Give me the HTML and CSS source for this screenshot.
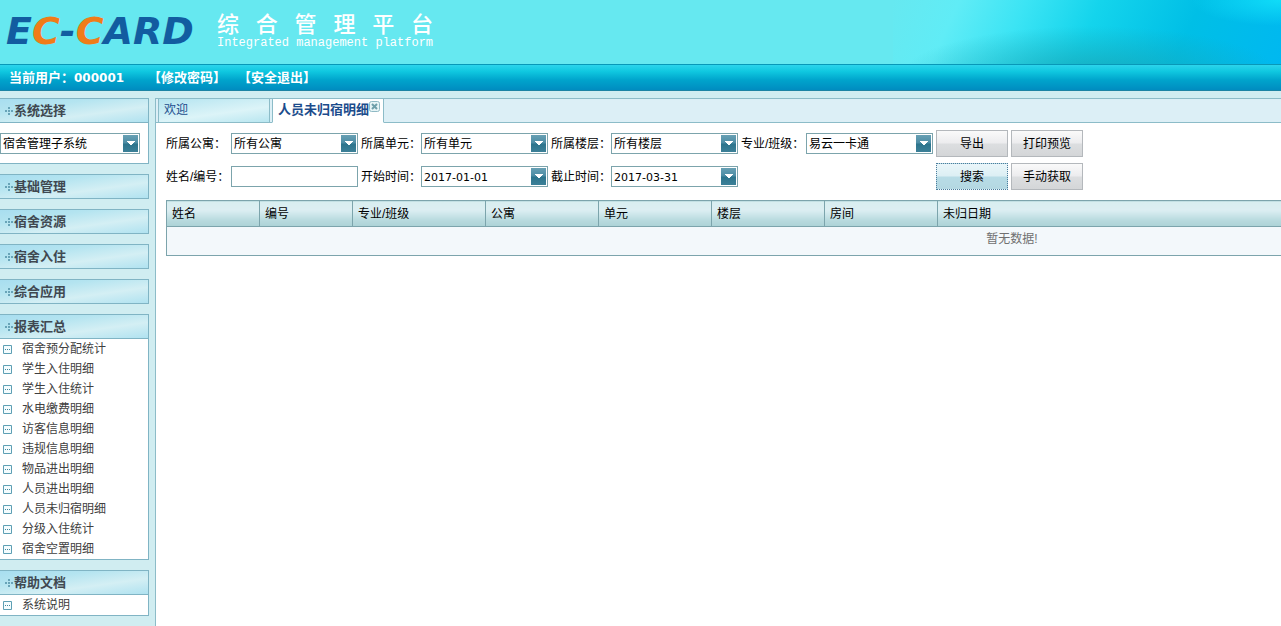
FILE: index.html
```html
<!DOCTYPE html>
<html lang="zh-CN">
<head>
<meta charset="utf-8">
<title>综合管理平台</title>
<link rel="stylesheet" href="styles.css">
</head>
<body>
<svg class="defs" aria-hidden="true">
  <symbol id="cross" viewBox="0 0 8 8"><path d="M3 0h2v2H3zM3 3h2v2H3zM3 6h2v2H3zM0 3h2v2H0zM6 3h2v2H6z" fill="#68a4b8"/></symbol>
  <symbol id="leaf" viewBox="0 0 9 9"><path d="M.5.500h8v8h-8z" fill="#f4fcfe" stroke="#5d9fb4"/><path d="M2 4h1v1H2zM4 4h1v1H4zM6 4h1v1H6z" fill="#41859c"/></symbol>
  <symbol id="down" viewBox="0 0 15 17"><path d="M4 6h8v1h-1v1h-1v1H9v1H7V9H6V8H5V7H4z" fill="#fff"/></symbol>
  <symbol id="close" viewBox="0 0 11 11"><rect x=".5" y=".5" width="10" height="10" rx="2" fill="#e6f4f6" stroke="#8fb9c4"/><path d="M3 3l5 5M8 3l-5 5" stroke="#6f9faa" stroke-width="2"/></symbol>
</svg>
<header class="banner">
  <div class="logo">E<span class="logo-c">C</span>-<span class="logo-c">C</span>ARD</div>
  <div class="titles">
    <h1 class="title">综合管理平台</h1>
    <p class="subtitle">Integrated management platform</p>
  </div>
</header>
<nav class="userbar">
  <span class="user">当前用户：<span class="user-id">000001</span></span>
  <a href="#password">【修改密码】</a>
  <a href="#logout">【安全退出】</a>
</nav>
<div class="layout">
  <aside class="sidebar">
    <section class="panel">
      <h2 class="panel-head"><svg class="cross"><use href="#cross"/></svg>系统选择</h2>
      <div class="panel-body">
        <div class="combo system">
          <select class="combo-field" aria-label="系统选择"><option>宿舍管理子系统</option></select>
          <svg class="combo-arrow"><use href="#down"/></svg>
        </div>
      </div>
    </section>
    <section class="panel"><h2 class="panel-head"><svg class="cross"><use href="#cross"/></svg>基础管理</h2></section>
    <section class="panel"><h2 class="panel-head"><svg class="cross"><use href="#cross"/></svg>宿舍资源</h2></section>
    <section class="panel"><h2 class="panel-head"><svg class="cross"><use href="#cross"/></svg>宿舍入住</h2></section>
    <section class="panel"><h2 class="panel-head"><svg class="cross"><use href="#cross"/></svg>综合应用</h2></section>
    <section class="panel">
      <h2 class="panel-head"><svg class="cross"><use href="#cross"/></svg>报表汇总</h2>
      <ul class="menu">
        <li><a href="#r1"><svg class="leaf"><use href="#leaf"/></svg>宿舍预分配统计</a></li>
        <li><a href="#r2"><svg class="leaf"><use href="#leaf"/></svg>学生入住明细</a></li>
        <li><a href="#r3"><svg class="leaf"><use href="#leaf"/></svg>学生入住统计</a></li>
        <li><a href="#r4"><svg class="leaf"><use href="#leaf"/></svg>水电缴费明细</a></li>
        <li><a href="#r5"><svg class="leaf"><use href="#leaf"/></svg>访客信息明细</a></li>
        <li><a href="#r6"><svg class="leaf"><use href="#leaf"/></svg>违规信息明细</a></li>
        <li><a href="#r7"><svg class="leaf"><use href="#leaf"/></svg>物品进出明细</a></li>
        <li><a href="#r8"><svg class="leaf"><use href="#leaf"/></svg>人员进出明细</a></li>
        <li><a href="#r9"><svg class="leaf"><use href="#leaf"/></svg>人员未归宿明细</a></li>
        <li><a href="#r10"><svg class="leaf"><use href="#leaf"/></svg>分级入住统计</a></li>
        <li><a href="#r11"><svg class="leaf"><use href="#leaf"/></svg>宿舍空置明细</a></li>
      </ul>
    </section>
    <section class="panel">
      <h2 class="panel-head"><svg class="cross"><use href="#cross"/></svg>帮助文档</h2>
      <ul class="menu">
        <li><a href="#help"><svg class="leaf"><use href="#leaf"/></svg>系统说明</a></li>
      </ul>
    </section>
  </aside>
  <main class="content">
    <div class="tabs">
      <a class="tab" href="#welcome">欢迎</a>
      <div class="tab tab-active"><a href="#absent">人员未归宿明细</a><button class="tab-close" type="button" aria-label="关闭"><svg class="close"><use href="#close"/></svg></button></div>
    </div>
    <form class="filters">
      <label for="building">所属公寓：</label>
      <div class="combo"><select class="combo-field" id="building"><option>所有公寓</option></select><svg class="combo-arrow"><use href="#down"/></svg></div>
      <label for="unit">所属单元：</label>
      <div class="combo"><select class="combo-field" id="unit"><option>所有单元</option></select><svg class="combo-arrow"><use href="#down"/></svg></div>
      <label for="floor">所属楼层：</label>
      <div class="combo"><select class="combo-field" id="floor"><option>所有楼层</option></select><svg class="combo-arrow"><use href="#down"/></svg></div>
      <label for="class">专业/班级：</label>
      <div class="combo"><select class="combo-field" id="class"><option>易云一卡通</option></select><svg class="combo-arrow"><use href="#down"/></svg></div>
      <button class="btn" type="button">导出</button>
      <button class="btn" type="button">打印预览</button>

      <label for="name">姓名/编号：</label>
      <input class="text" id="name" type="text">
      <label for="start">开始时间：</label>
      <div class="combo"><input class="combo-field date" id="start" type="text" value="2017-01-01"><button class="combo-button" type="button" aria-label="选择开始时间"><svg class="combo-arrow"><use href="#down"/></svg></button></div>
      <label for="end">截止时间：</label>
      <div class="combo"><input class="combo-field date" id="end" type="text" value="2017-03-31"><button class="combo-button" type="button" aria-label="选择截止时间"><svg class="combo-arrow"><use href="#down"/></svg></button></div>
      <button class="btn btn-primary" type="submit">搜索</button>
      <button class="btn" type="button">手动获取</button>
    </form>
    <div class="grid-wrap">
      <table class="grid">
        <thead>
          <tr><th class="narrow">姓名</th><th class="narrow">编号</th><th class="wide">专业/班级</th><th class="mid">公寓</th><th class="mid">单元</th><th class="mid">楼层</th><th class="mid">房间</th><th>未归日期</th></tr>
        </thead>
        <tbody><tr><td colspan="8">暂无数据!</td></tr></tbody>
      </table>
    </div>
  </main>
</div>
</body>
</html>
```
FILE: styles.css
```css
* { box-sizing: border-box; }
html, body { height: 100%; }
body {
  margin: 0;
  display: flex;
  flex-direction: column;
  overflow: hidden;
  background: #d0edf1;
  color: #000;
  font: 12px/20px "Liberation Sans", "Noto Sans CJK SC", sans-serif;
}
a { color: inherit; text-decoration: none; }
h1, h2, p, ul { margin: 0; padding: 0; }
ul { list-style: none; }
input, select, button { font: inherit; color: inherit; margin: 0; padding: 0; border: 0; background: none; }
svg { display: block; flex: none; }
.defs { position: absolute; width: 0; height: 0; }

.banner {
  flex: none;
  display: flex;
  gap: 24px;
  height: 64px;
  padding: 9px 6px 0;
  background:
    radial-gradient(ellipse 90px 26px at 100% 0, #10dcf8 0, #10dcf800) no-repeat,
    radial-gradient(ellipse 190px 50px at calc(100% - 190px) 76px, #18a4b4d0, #18a4b400) no-repeat,
    linear-gradient(115deg, #66e8f000 0, #60ecf6 16%, #3ce4f4 32%, #14d4ec 50%, #00bfe6 74%, #00b8f0) right / 388px 100% no-repeat,
    #66e8f0;
}
.logo {
  width: 187px;
  color: #125ca0;
  font: italic bold 38px/44px "DejaVu Sans", sans-serif;
  white-space: nowrap;
}
.logo-c { color: #f07c18; }
.titles { width: 216px; color: #fff; }
.title {
  font: 500 22px/26px "Noto Sans CJK SC", sans-serif;
  text-align: justify;
  text-align-last: justify;
  text-justify: inter-character;
}
.subtitle { padding-top: 1px; font: 12px/14px "Liberation Mono", monospace; white-space: nowrap; }

.userbar {
  flex: none;
  display: flex;
  align-items: center;
  gap: 12px;
  height: 27px;
  padding: 0 9px;
  border-top: 1px solid #0898b8;
  border-bottom: 1px solid #1c84a4;
  background: linear-gradient(#2cd4ec, #10c8e0 25%, #00a4cc 60%, #008cc0);
  color: #fff;
  font-size: 13px;
  font-weight: bold;
}
.user { width: 127px; white-space: nowrap; }
.user-id { font: bold 12px "DejaVu Sans", sans-serif; }

.layout { flex: 1; display: flex; gap: 6px; min-height: 0; padding-top: 7px; }
.sidebar { flex: none; width: 149px; display: flex; flex-direction: column; gap: 10px; }
.panel { flex: none; border: 1px solid #80b4c4; border-left: 0; background: #fff; }
.panel-head {
  display: flex;
  align-items: center;
  gap: 1px;
  height: 23px;
  padding-left: 5px;
  background: linear-gradient(172deg, #a8def0 0, #b4e4f0 30%, #d4eff4 64%, #b0e2f0);
  color: #404850;
  font-size: 13px;
  font-weight: bold;
}
.panel-head + * { border-top: 1px solid #80b4c4; }
.cross { width: 8px; height: 8px; }
.panel-body { padding: 10px 8px 9px 0; }
.leaf { width: 9px; height: 9px; }
.menu a { display: flex; align-items: center; gap: 10px; height: 20px; padding-left: 3px; color: #404040; }

.content {
  flex: 1;
  min-width: 0;
  display: flex;
  flex-direction: column;
  border: 1px solid #8cbcc8;
  border-width: 1px 0 0 1px;
  background: #fff;
}
.tabs {
  flex: none;
  display: flex;
  gap: 2px;
  height: 24px;
  padding-left: 2px;
  background: #dceff6;
  box-shadow: inset 0 -1px #8cbcc8;
  color: #1c4c8c;
}
.tab {
  display: flex;
  width: 112px;
  padding: 1px 0 0 5px;
  border: 1px solid #8cbcc8;
  border-top: 0;
  background: linear-gradient(172deg, #b4e4f0, #dcf4f8 60%, #b8e6f0);
  white-space: nowrap;
}
.tab-active { border-bottom-color: #fff; background: #fff; font-size: 13px; font-weight: bold; }
.tab-close { display: flex; height: 12px; padding-top: 1px; cursor: pointer; }
.close { width: 11px; height: 11px; }

.filters {
  display: grid;
  grid-template-columns: 62px 127px 57px 127px 57px 127px 62px 127px 72px 72px;
  grid-auto-rows: 27px;
  gap: 6px 3px;
  align-items: center;
  padding: 7px 0 10px 10px;
  white-space: nowrap;
}
.combo, .text { height: 21px; border: 1px solid #7ca4ac; background: #fff; }
.combo { display: flex; padding: 1px; }
.system { width: 140px; }
.combo-field { flex: 1; width: 0; height: 17px; padding: 1px 0 0 1px; appearance: none; line-height: 16px; outline: 0; }
.date { font: 11px/16px "DejaVu Sans", sans-serif; }
.combo-arrow {
  width: 15px;
  height: 17px;
  background: linear-gradient(#68a0b4, #4c8ca4 48%, #2c748c 52%, #3c8098);
  pointer-events: none;
}
.text { padding: 0 3px; width: 100%; }
.btn {
  height: 27px;
  border: 1px solid #b4b8bc;
  background: linear-gradient(#fafafa, #ececee 48%, #dcdee0 52%, #d4d6d8);
}
.btn-primary {
  grid-column: 9;
  border: 1px dotted #4c7c9c;
  background: linear-gradient(#eaf6fa, #dceff4 48%, #b8dce6 52%, #b4d8e2);
}

.grid-wrap { overflow: hidden; padding-left: 10px; }
.grid { width: 1692px; table-layout: fixed; border-collapse: collapse; border: 1px solid #7ca4ac; }
.grid th {
  height: 26px;
  padding: 0 5px;
  border: 1px solid #7ca4ac;
  background: linear-gradient(#d8eef0, #dceef2 35%, #b8dade 75%, #acd2d6);
  font-weight: normal;
  line-height: 20px;
  text-align: left;
}
.narrow { width: 93px; }
.wide { width: 133px; }
.mid { width: 113px; }
.grid td { height: 29px; padding: 0 0 4px; background: #f3f8fb; color: #707070; text-align: center; }
```
